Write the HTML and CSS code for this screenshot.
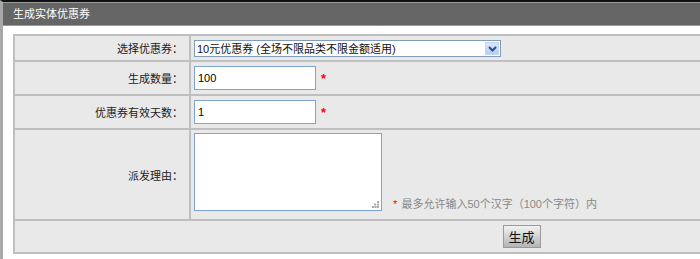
FILE: index.html
```html
<!DOCTYPE html>
<html lang="zh-CN">

<head>
  <meta charset="UTF-8" />
  <title>生成实体优惠券</title>
  <link rel="stylesheet" href="styles.css">
</head>

<body>
  <div class="panel">
    <div class="panel-title">生成实体优惠券</div>
    <div class="panel-body">
      <form id="couponForm">
        <table class="form-table">
          <tr class="row-select">
            <td class="label">选择优惠券：</td>
            <td class="value">
              <span class="select-wrap">
                <select name="coupon">
                  <option>10元优惠券 (全场不限品类不限金额适用)</option>
                </select>
                <span class="select-btn">
                  <svg width="9" height="6" viewBox="0 0 9 6"><path d="M1 1 L4.5 4.5 L8 1" fill="none" stroke="#2b4f86" stroke-width="2"/></svg>
                </span>
              </span>
            </td>
          </tr>
          <tr class="row-input">
            <td class="label">生成数量：</td>
            <td class="value"><input type="text" name="num" value="100" /> <span class="req">*</span></td>
          </tr>
          <tr class="row-input">
            <td class="label">优惠券有效天数：</td>
            <td class="value"><input type="text" name="days" value="1" /> <span class="req">*</span></td>
          </tr>
          <tr class="row-area">
            <td class="label">派发理由：</td>
            <td class="value">
              <span class="area-wrap">
                <textarea name="reason"></textarea>
                <svg class="grip" width="7" height="7" viewBox="0 0 7 7">
                  <rect x="5" y="0" width="2" height="2" fill="#aaa"/>
                  <rect x="2" y="2.5" width="2" height="2" fill="#aaa"/>
                  <rect x="5" y="2.5" width="2" height="2" fill="#aaa"/>
                  <rect x="0" y="5" width="2" height="2" fill="#aaa"/>
                  <rect x="2.5" y="5" width="2" height="2" fill="#aaa"/>
                  <rect x="5" y="5" width="2" height="2" fill="#aaa"/>
                </svg>
              </span>
              <span class="hint"><span class="req-small">*</span> 最多允许输入50个汉字（100个字符）内</span>
            </td>
          </tr>
          <tr class="row-submit">
            <td colspan="2"><button type="submit">生成</button></td>
          </tr>
        </table>
      </form>
    </div>
  </div>
</body>

</html>
```

FILE: styles.css
```css
html,
body {
  margin: 0;
  padding: 0;
  overflow: hidden;
}

body {
  font-family: "Liberation Sans", "Noto Sans CJK SC", sans-serif;
  font-size: 11px;
  color: #222;
  background: #fff;
}

.panel {
  width: 1040px;
  height: 259px;
  border-left: 3px solid #a8a8a8;
  border-top: 2px solid #111;
}

.panel-title {
  height: 22px;
  line-height: 22px;
  background: #666;
  border-top: 1px solid #9a9a9a;
  border-bottom: 1px solid #9a9a9a;
  color: #fff;
  padding-left: 10px;
}

.panel-body {
  padding: 8px 0 0 10px;
}

.form-table {
  width: 1017px;
  border-collapse: collapse;
  background: #e9e9e9;
}

.form-table td {
  border: 2px solid #bfbfbf;
  padding: 0;
}

.label {
  width: 176px;
  text-align: right;
  padding-right: 6px !important;
  box-sizing: border-box;
}

.value {
  padding-left: 3px !important;
}

.row-select td {
  height: 24px;
}

.row-input td {
  height: 32px;
}

.row-area td {
  height: 86px;
}

.row-submit td {
  height: 31px;
  text-align: center;
}

.select-wrap {
  position: relative;
  display: inline-block;
  vertical-align: middle;
}

select {
  appearance: none;
  -webkit-appearance: none;
  width: 307px;
  height: 17px;
  border: 1px solid #7f9db9;
  border-radius: 0;
  background: #fff;
  font-family: "Liberation Sans", "Noto Sans CJK SC", sans-serif;
  font-size: 11px;
  padding: 0 0 0 2px;
  color: #111;
  display: block;
  margin-top: 1px;
}

.select-btn {
  position: absolute;
  right: 2px;
  top: 3px;
  width: 14px;
  height: 13px;
  background: linear-gradient(#dbe6fb, #b7cdf5);
  border: 1px solid #c3d3f4;
  box-sizing: border-box;
  display: flex;
  align-items: center;
  justify-content: center;
}

input[type="text"] {
  width: 122px;
  height: 24px;
  box-sizing: border-box;
  border: 1px solid #7ea4d6;
  padding: 0 3px;
  font-family: "Liberation Sans", sans-serif;
  font-size: 11px;
  vertical-align: middle;
  margin: 0;
}

.req {
  color: #ff0000;
  font-weight: bold;
  font-size: 13px;
  vertical-align: middle;
  margin-left: 2px;
}

.row-area .value {
  vertical-align: top;
  padding-top: 3px !important;
}

.area-wrap {
  position: relative;
  display: inline-block;
  vertical-align: bottom;
  line-height: 0;
}

textarea {
  width: 188px;
  height: 78px;
  box-sizing: border-box;
  border: 1px solid #7ea4d6;
  margin: 0;
  resize: none;
}

.grip {
  position: absolute;
  right: 3px;
  bottom: 3px;
}

.hint {
  display: inline-block;
  color: #888;
  margin-left: 8px;
  vertical-align: bottom;
  margin-bottom: 0;
}

.req-small {
  color: #ff0000;
  margin-right: 1px;
}

button {
  width: 38px;
  height: 23px;
  border: 1px solid #999;
  background: linear-gradient(#f2f2f2, #b4b4b4);
  font-family: "Noto Sans CJK SC", sans-serif;
  font-size: 13px;
  color: #111;
  padding: 0;
  cursor: pointer;
}
```
